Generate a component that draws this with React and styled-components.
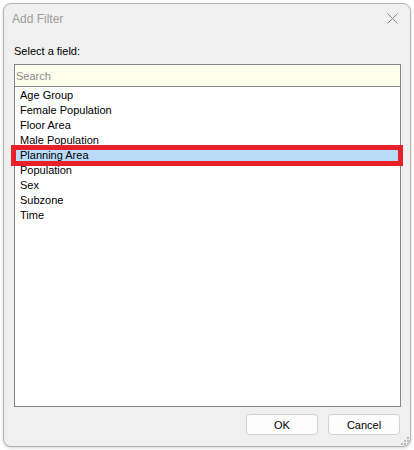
import React from 'react'
import styled, { createGlobalStyle } from 'styled-components'

const GlobalStyle = createGlobalStyle`
  html, body {
    margin: 0;
    padding: 0;
    background: #ffffff;
  }
  body {
    font-family: "Liberation Sans", Arial, sans-serif;
    font-size: 11px;
    color: #000;
  }
`

const Page = styled.div`
  width: 414px;
  height: 450px;
  padding: 3px;
  box-sizing: border-box;
`

const Window = styled.div`
  position: relative;
  width: 408px;
  height: 444px;
  box-sizing: border-box;
  border: 1px solid #b4b4b4;
  border-radius: 8px;
  background: #f0f0f0;
  box-shadow: 0 1px 3px rgba(0, 0, 0, 0.18);
  display: flex;
  flex-direction: column;
  overflow: hidden;
`

const TitleBar = styled.div`
  height: 32px;
  display: flex;
  align-items: center;
  justify-content: space-between;
  padding: 0 8px 0 8px;
`

const Title = styled.span`
  font-size: 12px;
  color: #9c9c9c;
  margin-top: -2px;
`

const CloseButton = styled.button`
  width: 14px;
  height: 14px;
  border: none;
  background: transparent;
  padding: 0;
  margin-right: 3px;
  margin-top: -3px;
  display: flex;
  align-items: center;
  justify-content: center;
`

const Body = styled.div`
  flex: 1;
  display: flex;
  flex-direction: column;
  padding: 8px 9px 11px 10px;
`

const Label = styled.div`
  height: 15px;
  line-height: 15px;
  margin-bottom: 5px;
`

const FieldBox = styled.div`
  height: 343px;
  box-sizing: border-box;
  border: 1px solid #82848e;
  background: #ffffff;
  display: flex;
  flex-direction: column;
`

const SearchInput = styled.input`
  height: 22px;
  box-sizing: border-box;
  border: none;
  border-bottom: 1px solid #82848e;
  background: #fefeec;
  font-family: inherit;
  font-size: 11px;
  padding: 1px 1px 0;
  outline: none;

  &::placeholder {
    color: #8c8c8c;
  }
`

const List = styled.ul`
  list-style: none;
  margin: 0;
  padding: 1px 0 0;
`

const Item = styled.li`
  position: relative;
  height: 15px;
  line-height: 15px;
  padding-left: 5px;
  background: ${p => (p.$selected ? '#b9dbf8' : 'transparent')};
`

const Highlight = styled.div`
  position: absolute;
  top: -3px;
  left: -4px;
  width: 392px;
  height: 21px;
  box-sizing: border-box;
  border: 5px solid #e8202a;
  pointer-events: none;
`

const Footer = styled.div`
  display: flex;
  justify-content: flex-end;
  gap: 10px;
  margin-top: 7px;
  padding-right: 1px;
`

const Button = styled.button`
  width: 72px;
  height: 21px;
  box-sizing: border-box;
  border: 1px solid #d2d2d2;
  border-radius: 4px;
  background: #fdfdfd;
  font-family: inherit;
  font-size: 11px;
  color: #000;
  padding: 0;
`

const Grip = styled.svg`
  position: absolute;
  right: 1px;
  bottom: 1px;
`

const fields = [
  'Age Group',
  'Female Population',
  'Floor Area',
  'Male Population',
  'Planning Area',
  'Population',
  'Sex',
  'Subzone',
  'Time',
]

export default function App() {
  return (
    <Page>
      <GlobalStyle />
      <Window>
        <TitleBar>
          <Title>Add Filter</Title>
          <CloseButton aria-label="Close">
            <svg width="11" height="11" viewBox="0 0 11 11">
              <path d="M0.5 0.5 L10.5 10.5 M10.5 0.5 L0.5 10.5" stroke="#8a8a8a" strokeWidth="1" />
            </svg>
          </CloseButton>
        </TitleBar>
        <Body>
          <Label>Select a field:</Label>
          <FieldBox>
            <SearchInput placeholder="Search" />
            <List>
              {fields.map(f => (
                <Item key={f} $selected={f === 'Planning Area'}>
                  {f}
                  {f === 'Planning Area' && <Highlight />}
                </Item>
              ))}
            </List>
          </FieldBox>
          <Footer>
            <Button>OK</Button>
            <Button>Cancel</Button>
          </Footer>
        </Body>
        <Grip width="10" height="10" viewBox="0 0 10 10">
          <rect x="8" y="2" width="2" height="2" fill="#b8b8b8" />
          <rect x="5" y="5" width="2" height="2" fill="#b8b8b8" />
          <rect x="8" y="5" width="2" height="2" fill="#b8b8b8" />
          <rect x="2" y="8" width="2" height="2" fill="#b8b8b8" />
          <rect x="5" y="8" width="2" height="2" fill="#b8b8b8" />
          <rect x="8" y="8" width="2" height="2" fill="#b8b8b8" />
        </Grip>
      </Window>
    </Page>
  )
}
